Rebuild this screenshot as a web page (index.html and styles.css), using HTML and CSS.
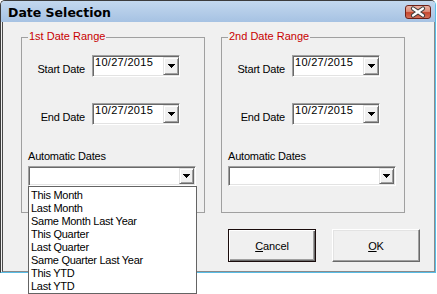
FILE: index.html
```html
<!DOCTYPE html>
<html>
<head>
<meta charset="utf-8">
<link rel="stylesheet" href="styles.css">
</head>
<body>
<div class="window">
  <div class="titlebar">
    <span class="title">Date Selection</span>
    <span class="close">
      <svg width="26" height="14" viewBox="0 0 26 14">
        <path d="M8 3.5 L18 10.5 M18 3.5 L8 10.5" stroke="#3a3a3a" stroke-width="4.2" stroke-linecap="round" fill="none"/>
        <path d="M8 3.5 L18 10.5 M18 3.5 L8 10.5" stroke="#ffffff" stroke-width="2.2" stroke-linecap="round" fill="none"/>
      </svg>
    </span>
  </div>
  <div class="body">
    <div class="groups">
      <div class="group">
        <span class="legend">1st Date Range</span>
        <div class="row">
          <span class="lbl">Start Date</span>
          <div class="dtp sunken"><span class="val">10/27/2015</span><span class="ddbtn raised"><svg class="arrow" width="7" height="4" viewBox="0 0 7 4"><rect x="0" y="0" width="7" height="1"/><rect x="1" y="1" width="5" height="1"/><rect x="2" y="2" width="3" height="1"/><rect x="3" y="3" width="1" height="1"/></svg></span></div>
        </div>
        <div class="row">
          <span class="lbl">End Date</span>
          <div class="dtp sunken"><span class="val">10/27/2015</span><span class="ddbtn raised"><svg class="arrow" width="7" height="4" viewBox="0 0 7 4"><rect x="0" y="0" width="7" height="1"/><rect x="1" y="1" width="5" height="1"/><rect x="2" y="2" width="3" height="1"/><rect x="3" y="3" width="1" height="1"/></svg></span></div>
        </div>
        <div class="auto-label">Automatic Dates</div>
        <div class="combo-wrap">
          <div class="combo sunken"><span class="ddbtn raised"><svg class="arrow" width="7" height="4" viewBox="0 0 7 4"><rect x="0" y="0" width="7" height="1"/><rect x="1" y="1" width="5" height="1"/><rect x="2" y="2" width="3" height="1"/><rect x="3" y="3" width="1" height="1"/></svg></span></div>
          <ul class="list">
            <li>This Month</li>
            <li>Last Month</li>
            <li>Same Month Last Year</li>
            <li>This Quarter</li>
            <li>Last Quarter</li>
            <li>Same Quarter Last Year</li>
            <li>This YTD</li>
            <li>Last YTD</li>
          </ul>
        </div>
      </div>
      <div class="group">
        <span class="legend">2nd Date Range</span>
        <div class="row">
          <span class="lbl">Start Date</span>
          <div class="dtp sunken"><span class="val">10/27/2015</span><span class="ddbtn raised"><svg class="arrow" width="7" height="4" viewBox="0 0 7 4"><rect x="0" y="0" width="7" height="1"/><rect x="1" y="1" width="5" height="1"/><rect x="2" y="2" width="3" height="1"/><rect x="3" y="3" width="1" height="1"/></svg></span></div>
        </div>
        <div class="row">
          <span class="lbl">End Date</span>
          <div class="dtp sunken"><span class="val">10/27/2015</span><span class="ddbtn raised"><svg class="arrow" width="7" height="4" viewBox="0 0 7 4"><rect x="0" y="0" width="7" height="1"/><rect x="1" y="1" width="5" height="1"/><rect x="2" y="2" width="3" height="1"/><rect x="3" y="3" width="1" height="1"/></svg></span></div>
        </div>
        <div class="auto-label">Automatic Dates</div>
        <div class="combo-wrap">
          <div class="combo sunken"><span class="ddbtn raised"><svg class="arrow" width="7" height="4" viewBox="0 0 7 4"><rect x="0" y="0" width="7" height="1"/><rect x="1" y="1" width="5" height="1"/><rect x="2" y="2" width="3" height="1"/><rect x="3" y="3" width="1" height="1"/></svg></span></div>
        </div>
      </div>
    </div>
    <div class="buttons">
      <div class="btn btn-default"><span><u>C</u>ancel</span></div>
      <div class="btn"><span><u>O</u>K</span></div>
    </div>
  </div>
</div>
</body>
</html>
```
FILE: styles.css
```css
* { box-sizing: border-box; }
html, body { margin: 0; padding: 0; }
body {
  background: #ffffff;
  width: 437px;
  height: 294px;
  overflow: hidden;
  font-family: "Liberation Sans", Arial, sans-serif;
  font-size: 11px;
  color: #000000;
}
.window {
  position: relative;
  width: 436px;
  height: 273px;
  border: 1px solid #3c3c3c;
  border-right-color: #58bde6;
  border-bottom-color: #58bde6;
  border-radius: 5px 5px 0 0;
  display: flex;
  flex-direction: column;
  background: #f0f0f0;
}
.titlebar {
  height: 21px;
  flex: none;
  display: flex;
  justify-content: space-between;
  align-items: flex-start;
  padding: 4px 4px 0 7px;
  background: linear-gradient(to bottom, #c3d8ee, #a6c2e3);
  border-radius: 4px 4px 0 0;
}
.title {
  font-family: "DejaVu Sans", Verdana, sans-serif;
  font-weight: bold;
  font-size: 12.5px;
  line-height: 15px;
}
.close {
  width: 26px;
  height: 14px;
  border: 1px solid #6e2118;
  border-radius: 3px;
  background: linear-gradient(to bottom, #eab1a3 0%, #dd8d79 45%, #c6472e 55%, #d4705a 100%);
  display: flex;
}
.close svg { display: block; margin: -1px; }
.body {
  flex: 1;
  margin-left: 1px;
  border-left: 1px solid #4a4a4a;
  border-right: 1px solid #8a8a8a;
  border-bottom: 1px solid #8a8a8a;
  padding: 15px 14px 0 18px;
  display: flex;
  flex-direction: column;
}
.groups {
  display: flex;
  gap: 16px;
}
.group {
  position: relative;
  width: 184px;
  height: 176px;
  border: 1px solid #a0a0a0;
  padding: 17px 6px 0 6px;
  display: flex;
  flex-direction: column;
}
.legend {
  position: absolute;
  left: 6px;
  top: -8px;
  padding: 0 1px;
  background: #f0f0f0;
  color: #c80000;
  line-height: 13px;
}
.row {
  display: flex;
  align-items: flex-start;
  height: 22px;
}
.row + .row { margin-top: 26px; }
.lbl {
  width: 57px;
  margin-right: 7px;
  margin-top: 8px;
  text-align: right;
  line-height: 13px;
  letter-spacing: -0.2px;
  white-space: nowrap;
}
.sunken {
  background: #ffffff;
  border: 1px solid;
  border-color: #a0a0a0 #ffffff #ffffff #a0a0a0;
  box-shadow: inset 1px 1px 0 #696969, inset -1px -1px 0 #e3e3e3;
}
.raised {
  background: #f0f0f0;
  border: 1px solid;
  border-color: #e3e3e3 #696969 #696969 #e3e3e3;
  box-shadow: inset 1px 1px 0 #ffffff, inset -1px -1px 0 #a0a0a0;
}
.dtp {
  width: 88px;
  height: 22px;
  display: flex;
  align-items: flex-start;
}
.val {
  flex: 1;
  padding-left: 2px;
  line-height: 13px;
  letter-spacing: 0.3px;
}
.ddbtn {
  width: 16px;
  height: 18px;
  margin-top: 1px;
  flex: none;
  display: flex;
  align-items: center;
  justify-content: center;
}
.arrow { display: block; fill: #000000; }
.auto-label {
  margin-top: 25px;
  line-height: 13px;
  letter-spacing: -0.2px;
}
.combo-wrap {
  position: relative;
  margin-top: 3px;
  width: 168px;
}
.combo {
  height: 20px;
  padding: 1px;
  display: flex;
  justify-content: flex-end;
}
.combo .ddbtn {
  width: 15px;
  height: 16px;
  margin-top: 0;
}
.list {
  position: absolute;
  left: 0;
  top: 100%;
  z-index: 5;
  width: 169px;
  margin: 0;
  padding: 2px 0 0 2px;
  list-style: none;
  background: #ffffff;
  border: 1px solid #646464;
}
.list li {
  height: 13px;
  line-height: 13px;
  letter-spacing: -0.28px;
  white-space: nowrap;
}
.buttons {
  display: flex;
  justify-content: flex-end;
  gap: 16px;
  margin-top: 16px;
}
.btn {
  width: 88px;
  height: 33px;
  display: flex;
  align-items: center;
  justify-content: center;
  background: #f0f0f0;
  border: 1px solid;
  border-color: #ffffff #696969 #696969 #ffffff;
  box-shadow: inset -1px -1px 0 #a0a0a0, inset 1px 1px 0 #e3e3e3;
  letter-spacing: -0.1px;
}
.btn-default {
  border: 1px solid #1a0c0c;
  box-shadow: inset 1px 1px 0 #ffffff, inset -1px -1px 0 #696969, inset -2px -2px 0 #a0a0a0;
}
.btn u { text-decoration: underline; text-underline-offset: 1px; }
```
